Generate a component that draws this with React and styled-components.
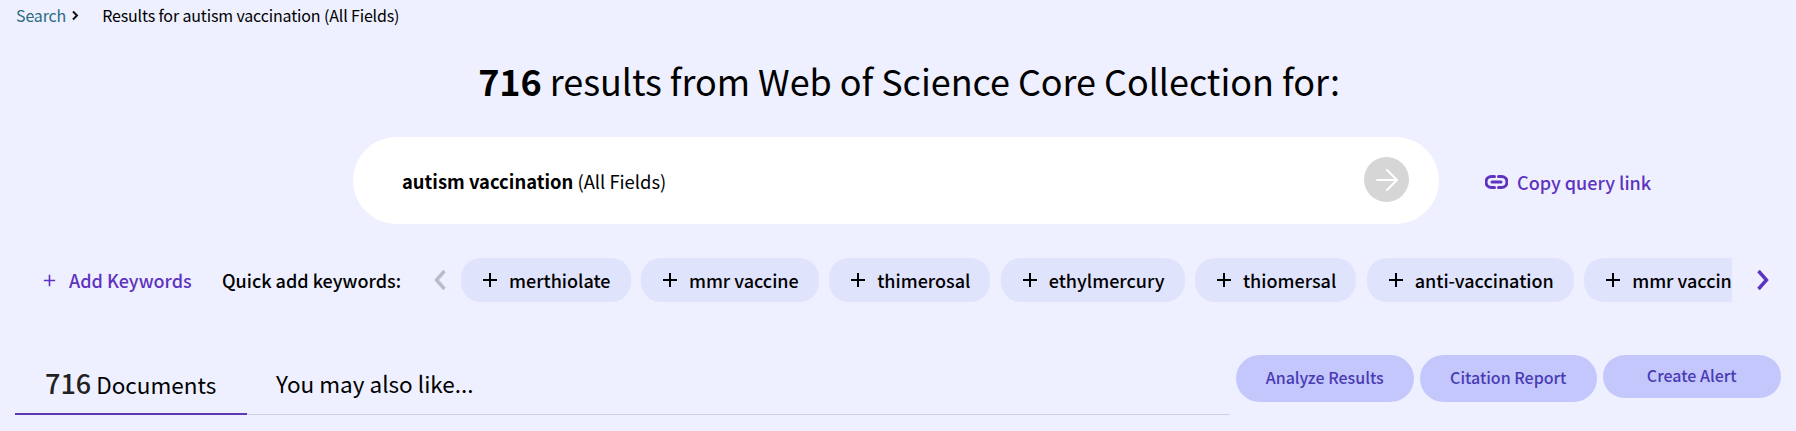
import styled, { createGlobalStyle } from 'styled-components'
import { ArrowRight } from 'lucide-react'

const keywords = ['merthiolate', 'mmr vaccine', 'thimerosal', 'ethylmercury', 'thiomersal', 'anti-vaccination', 'mmr vaccine autism']

const GlobalStyle = createGlobalStyle`
body {
  margin: 0;
  background: #eef0ff;
  font-family: "Noto Sans CJK SC", "Source Sans Pro", "Noto Sans", sans-serif;
  color: #000;
}
`
const Page = styled.div`
width: 1796px;
height: 431px;
overflow: hidden;
`
const Breadcrumb = styled.nav`
display: flex;
align-items: center;
height: 30px;
padding-left: 16px;
font-size: 16px;
letter-spacing: -0.15px;
line-height: 30px;
`
const CrumbLink = styled.a`
color: #2b6a84;
`
const CrumbArrow = styled.svg`
width: 8px;
height: 11px;
margin-left: 5px;
margin-right: 23px;
`
const Heading = styled.h1`
margin: 23px 0 0;
height: 54px;
font-size: 36px;
font-weight: 400;
letter-spacing: -0.05px;
line-height: 54px;
text-align: center;
padding-left: 22px;
b { font-weight: 700; }
`
const SearchRow = styled.div`
display: flex;
align-items: center;
margin-top: 30px;
padding-left: 353px;
`
const SearchPill = styled.div`
display: flex;
align-items: center;
justify-content: space-between;
box-sizing: border-box;
width: 1086px;
height: 87px;
padding: 0 30px 2px 49px;
background: #fff;
border-radius: 44px;
font-size: 18.4px;
b { font-weight: 700; }
`
const SearchText = styled.span`
margin-top: 2px;
`
const GoButton = styled.button`
display: flex;
align-items: center;
justify-content: center;
width: 45px;
height: 45px;
padding: 0;
border: 0;
border-radius: 50%;
background: #d6d6d6;
color: #fff;
`
const CopyLink = styled.a`
display: flex;
align-items: center;
gap: 9px;
margin-left: 46px;
margin-top: 2px;
color: #5e33bf;
font-size: 18px;
font-weight: 500;
`
const KeywordRow = styled.div`
display: flex;
align-items: center;
height: 44px;
margin-top: 34px;
padding-left: 43px;
`
const AddKeywords = styled.a`
display: flex;
align-items: center;
gap: 13px;
width: 179px;
color: #5e33bf;
font-size: 18px;
font-weight: 500;
`
const QuickLabel = styled.span`
width: 211px;
font-size: 18px;
font-weight: 500;
`
const Chevron = styled.svg`
flex: none;
width: 14px;
height: 22px;
`
const Carousel = styled.div`
display: flex;
gap: 10.4px;
width: 1271px;
margin: 0 24px 0 14px;
overflow: hidden;
`
const Chip = styled.button`
display: flex;
flex: none;
align-items: center;
gap: 11px;
height: 44px;
padding: 0 20px 0 21px;
border: 0;
border-radius: 20px;
background: #e0e3fc;
color: #000;
font-family: inherit;
font-size: 18px;
font-weight: 500;
`
const PlusIcon = styled.svg`
flex: none;
width: ${(props) => props.size}px;
height: ${(props) => props.size}px;
fill: none;
stroke: currentColor;
stroke-width: 2;
`
const TabRow = styled.div`
display: flex;
align-items: flex-start;
margin-top: 53px;
padding-left: 15px;
`
const Tabs = styled.div`
display: flex;
width: 1215px;
height: 60px;
box-sizing: border-box;
border-bottom: 1px solid #cfd0e6;
`
const Tab = styled.div`
box-sizing: border-box;
height: 60px;
padding-top: 10px;
width: ${(props) => props.width}px;
padding-left: ${(props) => props.inset}px;
font-size: 22.5px;
line-height: 36px;
border-bottom: ${(props) => (props.active ? '2px solid #5e3ab0' : '0')};
b {
  font-size: 27px;
  font-weight: 500;
  color: #222;
}
`
const Actions = styled.div`
display: flex;
align-items: flex-start;
gap: 6px;
margin-left: 6px;
`
const ActionButton = styled.button`
width: 177.5px;
height: ${(props) => props.height}px;
padding: 0 0 3px;
border: 0;
border-radius: 24px;
background: #c3c7fb;
color: #4a3bb5;
font-family: inherit;
font-size: 16px;
font-weight: 500;
`

function Plus({ size }) {
    return (
        <PlusIcon size={size} viewBox="0 0 16 16">
            <path d="M8 1v14M1 8h14" />
        </PlusIcon>
    )
}

function App() {
    return (
        <Page>
            <GlobalStyle />
            <Breadcrumb>
                <CrumbLink>Search</CrumbLink>
                <CrumbArrow viewBox="0 0 8 11">
                    <path d="M2 1.5 6 5.5 2 9.5" fill="none" stroke="#111" strokeWidth="2" />
                </CrumbArrow>
                <span>Results for autism vaccination (All Fields)</span>
            </Breadcrumb>
            <Heading><b>716</b> results from Web of Science Core Collection for:</Heading>
            <SearchRow>
                <SearchPill>
                    <SearchText><b>autism vaccination</b> (All Fields)</SearchText>
                    <GoButton><ArrowRight size={34} strokeWidth={1.5} /></GoButton>
                </SearchPill>
                <CopyLink>
                    <svg width="23" height="14" viewBox="0 0 23 14" fill="none" stroke="#5e33bf" strokeWidth="3" strokeLinecap="round">
                        <path d="M9.5 1.5H6.5a5.5 5.5 0 0 0 0 11h3" />
                        <path d="M13.5 1.5h3a5.5 5.5 0 0 1 0 11h-3" />
                        <path d="M7 7h9" />
                    </svg>
                    Copy query link
                </CopyLink>
            </SearchRow>
            <KeywordRow>
                <AddKeywords><Plus size={13} />Add Keywords</AddKeywords>
                <QuickLabel>Quick add keywords:</QuickLabel>
                <Chevron viewBox="0 0 14 22">
                    <path d="M11.5 2 3.5 11 11.5 20" fill="none" stroke="#b9bbc6" strokeWidth="3.4" />
                </Chevron>
                <Carousel>
                    {keywords.map((item) => (
                        <Chip key={item}><Plus size={16} />{item}</Chip>
                    ))}
                </Carousel>
                <Chevron viewBox="0 0 14 22">
                    <path d="M2.5 2 10.5 11 2.5 20" fill="none" stroke="#5e33bf" strokeWidth="3.4" />
                </Chevron>
            </KeywordRow>
            <TabRow>
                <Tabs>
                    <Tab active width={232} inset={30}><b>716</b> Documents</Tab>
                    <Tab width={300} inset={29}>You may also like...</Tab>
                </Tabs>
                <Actions>
                    <ActionButton height={47}>Analyze Results</ActionButton>
                    <ActionButton height={47}>Citation Report</ActionButton>
                    <ActionButton height={43}>Create Alert</ActionButton>
                </Actions>
            </TabRow>
        </Page>
    )
}

export default App
